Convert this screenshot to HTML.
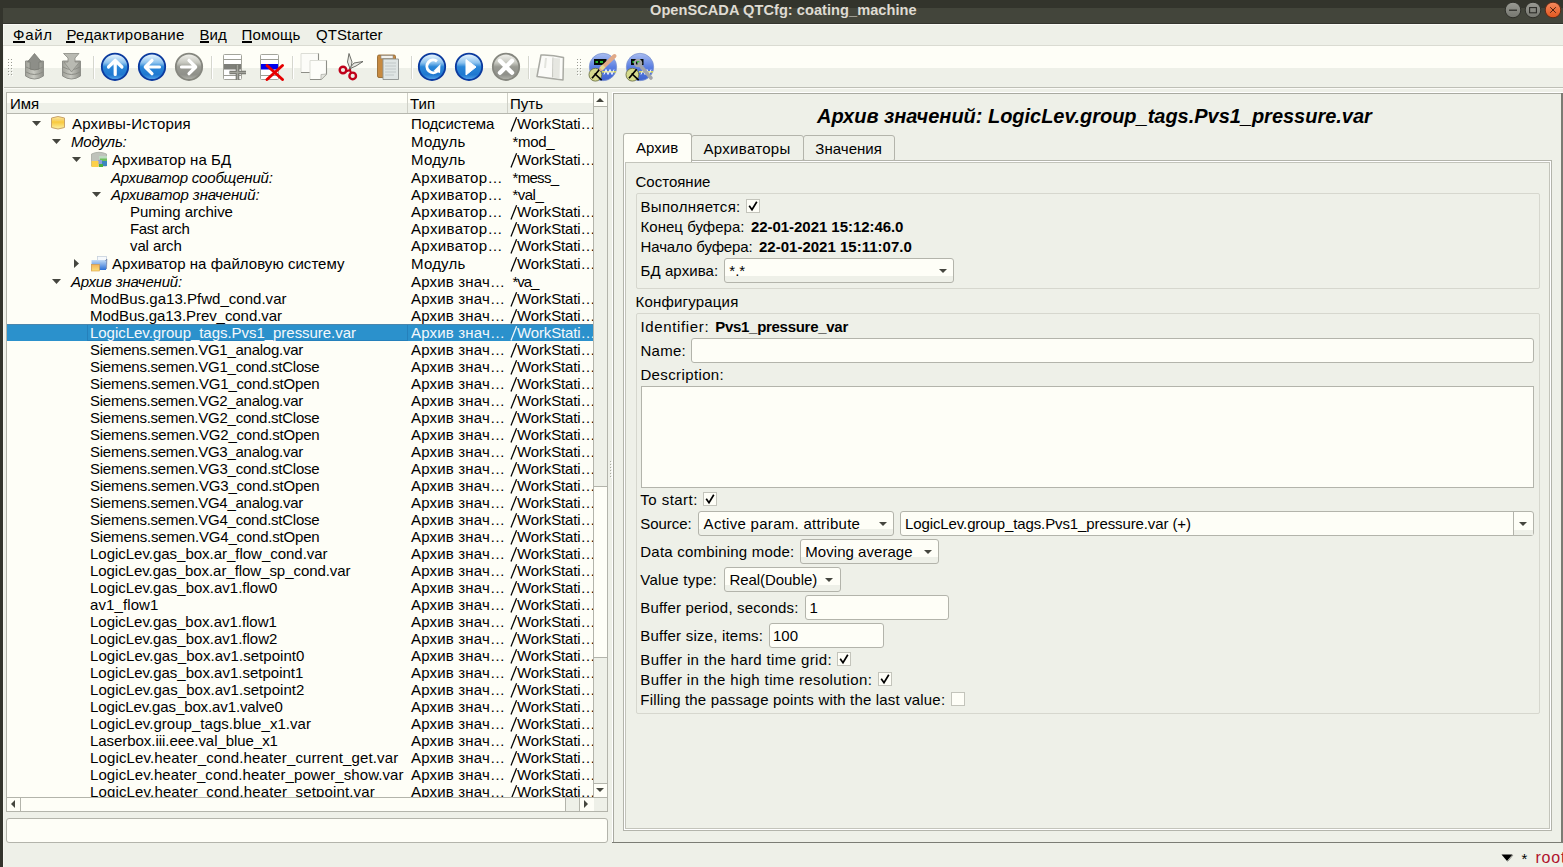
<!DOCTYPE html><html><head><meta charset="utf-8"><style>
html,body{margin:0;padding:0;}
body{width:1563px;height:867px;overflow:hidden;position:relative;background:#33342c;font-family:"Liberation Sans", sans-serif;}
div{position:absolute;box-sizing:border-box;}
.t{white-space:nowrap;}
svg{position:absolute;overflow:visible;}
</style></head><body>
<div style="left:3px;top:8px;width:1560px;height:15px;background:#43453b;"></div>
<div style="left:3px;top:23px;width:1560px;height:1px;background:#34352e;"></div>
<div class="t" style="left:650px;top:1.14px;font-size:14.6px;line-height:18px;font-weight:bold;font-style:normal;color:#dfdbd2;letter-spacing:0.038px;">OpenSCADA QTCfg: coating_machine</div>
<svg style="left:0;top:0" width="1563" height="24"><defs><linearGradient id="wb" x1="0" y1="0" x2="0" y2="1"><stop offset="0" stop-color="#9a9b94"/><stop offset="1" stop-color="#75766f"/></linearGradient><linearGradient id="wc" x1="0" y1="0" x2="0" y2="1"><stop offset="0" stop-color="#f58a5e"/><stop offset="1" stop-color="#e2561e"/></linearGradient></defs><circle cx="1513" cy="10" r="7.8" fill="url(#wb)" stroke="#2e2f29" stroke-width="1"/><rect x="1509" y="9.6" width="8" height="1.2" fill="#2b2b27"/><circle cx="1533" cy="10" r="7.8" fill="url(#wb)" stroke="#2e2f29" stroke-width="1"/><rect x="1529.6" y="7.6" width="6.8" height="5.2" fill="none" stroke="#2b2b27" stroke-width="1.1"/><circle cx="1553" cy="10" r="7.8" fill="url(#wc)" stroke="#5a2a18" stroke-width="1"/><path d="M1550.2 7.2 L1555.8 12.8 M1555.8 7.2 L1550.2 12.8" stroke="#3a1a0c" stroke-width="0.9"/></svg>
<div style="left:3px;top:24px;width:1560px;height:843px;background:#eef0e8;"></div>
<div style="left:3px;top:24px;width:1px;height:843px;background:#f6f6f0;"></div>
<div style="left:3px;top:24px;width:1560px;height:1px;background:#fbfbf6;"></div>
<div style="left:3px;top:45px;width:1560px;height:1px;background:#dadbd2;"></div>
<div class="t" style="left:13px;top:26.30px;font-size:15px;line-height:18px;font-weight:normal;font-style:normal;color:#000;letter-spacing:0.725px;">Файл</div>
<div class="t" style="left:66.5px;top:26.30px;font-size:15px;line-height:18px;font-weight:normal;font-style:normal;color:#000;letter-spacing:0.275px;">Редактирование</div>
<div class="t" style="left:199.5px;top:26.30px;font-size:15px;line-height:18px;font-weight:normal;font-style:normal;color:#000;letter-spacing:0.058px;">Вид</div>
<div class="t" style="left:241.5px;top:26.30px;font-size:15px;line-height:18px;font-weight:normal;font-style:normal;color:#000;letter-spacing:0.176px;">Помощь</div>
<div class="t" style="left:316px;top:26.30px;font-size:15px;line-height:18px;font-weight:normal;font-style:normal;color:#000;letter-spacing:0.094px;">QTStarter</div>
<div style="left:13px;top:41px;width:12px;height:2px;background:#000;"></div>
<div style="left:66px;top:41px;width:9px;height:2px;background:#000;"></div>
<div style="left:200px;top:41px;width:9px;height:2px;background:#000;"></div>
<div style="left:242px;top:41px;width:10px;height:2px;background:#000;"></div>
<div style="left:4px;top:46px;width:1559px;height:22px;background:#fefef7;"></div>
<div style="left:4px;top:87px;width:1559px;height:1px;background:#bebfb6;"></div>
<div style="left:4px;top:88px;width:1559px;height:1px;background:#fbfbf6;"></div>
<div style="left:9px;top:60px;width:1px;height:1px;background:#ffffff;"></div>
<div style="left:8px;top:59px;width:1px;height:1px;background:#9a9b94;"></div>
<div style="left:12px;top:60px;width:1px;height:1px;background:#ffffff;"></div>
<div style="left:11px;top:59px;width:1px;height:1px;background:#9a9b94;"></div>
<div style="left:9px;top:63px;width:1px;height:1px;background:#ffffff;"></div>
<div style="left:8px;top:62px;width:1px;height:1px;background:#9a9b94;"></div>
<div style="left:12px;top:63px;width:1px;height:1px;background:#ffffff;"></div>
<div style="left:11px;top:62px;width:1px;height:1px;background:#9a9b94;"></div>
<div style="left:9px;top:66px;width:1px;height:1px;background:#ffffff;"></div>
<div style="left:8px;top:65px;width:1px;height:1px;background:#9a9b94;"></div>
<div style="left:12px;top:66px;width:1px;height:1px;background:#ffffff;"></div>
<div style="left:11px;top:65px;width:1px;height:1px;background:#9a9b94;"></div>
<div style="left:9px;top:69px;width:1px;height:1px;background:#ffffff;"></div>
<div style="left:8px;top:68px;width:1px;height:1px;background:#9a9b94;"></div>
<div style="left:12px;top:69px;width:1px;height:1px;background:#ffffff;"></div>
<div style="left:11px;top:68px;width:1px;height:1px;background:#9a9b94;"></div>
<div style="left:9px;top:72px;width:1px;height:1px;background:#ffffff;"></div>
<div style="left:8px;top:71px;width:1px;height:1px;background:#9a9b94;"></div>
<div style="left:12px;top:72px;width:1px;height:1px;background:#ffffff;"></div>
<div style="left:11px;top:71px;width:1px;height:1px;background:#9a9b94;"></div>
<div style="left:9px;top:75px;width:1px;height:1px;background:#ffffff;"></div>
<div style="left:8px;top:74px;width:1px;height:1px;background:#9a9b94;"></div>
<div style="left:12px;top:75px;width:1px;height:1px;background:#ffffff;"></div>
<div style="left:11px;top:74px;width:1px;height:1px;background:#9a9b94;"></div>
<div style="left:578px;top:60px;width:1px;height:1px;background:#ffffff;"></div>
<div style="left:577px;top:59px;width:1px;height:1px;background:#9a9b94;"></div>
<div style="left:581px;top:60px;width:1px;height:1px;background:#ffffff;"></div>
<div style="left:580px;top:59px;width:1px;height:1px;background:#9a9b94;"></div>
<div style="left:578px;top:63px;width:1px;height:1px;background:#ffffff;"></div>
<div style="left:577px;top:62px;width:1px;height:1px;background:#9a9b94;"></div>
<div style="left:581px;top:63px;width:1px;height:1px;background:#ffffff;"></div>
<div style="left:580px;top:62px;width:1px;height:1px;background:#9a9b94;"></div>
<div style="left:578px;top:66px;width:1px;height:1px;background:#ffffff;"></div>
<div style="left:577px;top:65px;width:1px;height:1px;background:#9a9b94;"></div>
<div style="left:581px;top:66px;width:1px;height:1px;background:#ffffff;"></div>
<div style="left:580px;top:65px;width:1px;height:1px;background:#9a9b94;"></div>
<div style="left:578px;top:69px;width:1px;height:1px;background:#ffffff;"></div>
<div style="left:577px;top:68px;width:1px;height:1px;background:#9a9b94;"></div>
<div style="left:581px;top:69px;width:1px;height:1px;background:#ffffff;"></div>
<div style="left:580px;top:68px;width:1px;height:1px;background:#9a9b94;"></div>
<div style="left:578px;top:72px;width:1px;height:1px;background:#ffffff;"></div>
<div style="left:577px;top:71px;width:1px;height:1px;background:#9a9b94;"></div>
<div style="left:581px;top:72px;width:1px;height:1px;background:#ffffff;"></div>
<div style="left:580px;top:71px;width:1px;height:1px;background:#9a9b94;"></div>
<div style="left:578px;top:75px;width:1px;height:1px;background:#ffffff;"></div>
<div style="left:577px;top:74px;width:1px;height:1px;background:#9a9b94;"></div>
<div style="left:581px;top:75px;width:1px;height:1px;background:#ffffff;"></div>
<div style="left:580px;top:74px;width:1px;height:1px;background:#9a9b94;"></div>
<div style="left:93px;top:56px;width:1px;height:23px;background:#d6d7ce;"></div>
<div style="left:94px;top:56px;width:1px;height:23px;background:#ffffff;"></div>
<div style="left:211px;top:56px;width:1px;height:23px;background:#d6d7ce;"></div>
<div style="left:212px;top:56px;width:1px;height:23px;background:#ffffff;"></div>
<div style="left:292px;top:56px;width:1px;height:23px;background:#d6d7ce;"></div>
<div style="left:293px;top:56px;width:1px;height:23px;background:#ffffff;"></div>
<div style="left:411px;top:56px;width:1px;height:23px;background:#d6d7ce;"></div>
<div style="left:412px;top:56px;width:1px;height:23px;background:#ffffff;"></div>
<div style="left:528px;top:56px;width:1px;height:23px;background:#d6d7ce;"></div>
<div style="left:529px;top:56px;width:1px;height:23px;background:#ffffff;"></div>
<svg style="left:0;top:0" width="700" height="90" viewBox="0 0 700 90"><defs>
<linearGradient id="bl" x1="0" y1="0" x2="0" y2="1">
 <stop offset="0" stop-color="#f2fbff"/><stop offset="0.35" stop-color="#8cc2ee"/><stop offset="0.5" stop-color="#2a86d8"/><stop offset="0.8" stop-color="#1f78d0"/><stop offset="1" stop-color="#5aa8ec"/></linearGradient>
<linearGradient id="gr" x1="0" y1="0" x2="0" y2="1">
 <stop offset="0" stop-color="#f4f4ef"/><stop offset="0.35" stop-color="#c6c7bf"/><stop offset="0.5" stop-color="#9a9b93"/><stop offset="0.8" stop-color="#8f908a"/><stop offset="1" stop-color="#b5b6ae"/></linearGradient>
<linearGradient id="vca" x1="0" y1="0" x2="0" y2="1">
 <stop offset="0" stop-color="#a9bdf0"/><stop offset="0.5" stop-color="#5b7fe2"/><stop offset="1" stop-color="#3f63d0"/></linearGradient>
<linearGradient id="cyl" x1="0" y1="0" x2="1" y2="0">
 <stop offset="0" stop-color="#9fa098"/><stop offset="0.45" stop-color="#c9cac2"/><stop offset="1" stop-color="#8d8e87"/></linearGradient>
</defs><path d="M25.5 61 L25.5 76 Q34.5 82 43.5 76 L43.5 61 Z" fill="url(#cyl)" stroke="#8f908a" stroke-width="1"/><path d="M26 67 Q34.5 72 43 67 M26 72 Q34.5 77 43 72" fill="none" stroke="#8a8b84" stroke-width="1"/><path d="M27.5 62 L34.5 53.5 L41.5 62 L39 62 L39 69 Q34.5 71 30 69 L30 62 Z" fill="#8d8e88" stroke="#7a7b74" stroke-width="0.8"/><path d="M62.5 61 L62.5 76 Q71.5 82 80.5 76 L80.5 61 Z" fill="url(#cyl)" stroke="#8f908a" stroke-width="1"/><path d="M63 67 Q71.5 72 80 67 M63 72 Q71.5 77 80 72" fill="none" stroke="#8a8b84" stroke-width="1"/><path d="M63.5 53.5 L79 53.5 L75 58 L75 62 L79.5 62 L71.5 72 L64 62 L68 62 L68 58 Z" fill="#b9bab2" stroke="#8a8b84" stroke-width="0.8"/><circle cx="115" cy="66.8" r="13.2" fill="url(#bl)" stroke="#0b3a9e" stroke-width="1.8"/><path d="M115.2 74.5 L115.2 60.5 M108.5 67 L115.2 60.3 L121.9 67" fill="none" stroke="#fff" stroke-width="3.2" stroke-linecap="round" stroke-linejoin="round"/><circle cx="152" cy="66.8" r="13.2" fill="url(#bl)" stroke="#0b3a9e" stroke-width="1.8"/><path d="M159.5 67 L145.5 67 M152 60.3 L145.3 67 L152 73.7" fill="none" stroke="#fff" stroke-width="3.2" stroke-linecap="round" stroke-linejoin="round"/><circle cx="189" cy="66.8" r="13.2" fill="url(#gr)" stroke="#86877f" stroke-width="1.8"/><path d="M181.5 67 L195.5 67 M189 60.3 L195.7 67 L189 73.7" fill="none" stroke="#fff" stroke-width="3.2" stroke-linecap="round" stroke-linejoin="round"/><rect x="223.5" y="54.5" width="18" height="25" rx="1" fill="#fff" stroke="#a3a49b" stroke-width="1"/><path d="M224 59.5 H241 M224 75.5 H241" stroke="#9c9d95" stroke-width="1"/><rect x="224" y="64" width="17" height="5.5" fill="#7e7f79"/><path d="M229.5 72.5 H246 M237.5 65 V80" stroke="#6f706a" stroke-width="3.6"/><path d="M229.5 72.5 H246 M237.5 65 V80" stroke="#a2a39b" stroke-width="1.6"/><rect x="260.5" y="54.5" width="18" height="25" rx="1" fill="#fff" stroke="#a3a49b" stroke-width="1"/><path d="M261 59.5 H278 M261 75.5 H278" stroke="#9c9d95" stroke-width="1"/><rect x="261" y="64" width="17" height="5.5" fill="#0000ee"/><path d="M267 65.5 L282.5 79.5 M282.5 65.5 L267 79.5" stroke="#e60000" stroke-width="3" stroke-linecap="round"/><path d="M301 53.5 H318.5 V67 L313 72.5 H301 Z" fill="#fcfcf8" stroke="#dcddd6" stroke-width="1"/><path d="M318.5 53.5 V67 L313 72.5 H301" fill="none" stroke="#8d8e87" stroke-width="1.1"/><path d="M313 72.5 L313 67.5 L318.5 67" fill="#e4e5df" stroke="#b0b1aa" stroke-width="0.8"/><path d="M310 60.5 H326.5 V74 L321 79.5 H310 Z" fill="#fdfdf9" stroke="#dcddd6" stroke-width="1"/><path d="M326.5 60.5 V74 L321 79.5 H310" fill="none" stroke="#8d8e87" stroke-width="1.1"/><path d="M321 79.5 L321 74.5 L326.5 74" fill="#e4e5df" stroke="#b0b1aa" stroke-width="0.8"/><path d="M349 53.5 L347.5 62 L350.5 70 L352 62 Z" fill="#e9eae4" stroke="#5f605a" stroke-width="0.9"/><path d="M363 61.5 L354 63 L349 69 L356 66 Z" fill="#e9eae4" stroke="#5f605a" stroke-width="0.9"/><circle cx="343" cy="70" r="3.3" fill="none" stroke="#c0001a" stroke-width="2.4"/><circle cx="352.7" cy="75.9" r="3.3" fill="none" stroke="#c0001a" stroke-width="2.4"/><path d="M345.5 71.5 L350 70 L351 73" fill="none" stroke="#c0001a" stroke-width="2"/><rect x="377.5" y="55" width="18" height="22.5" rx="1.5" fill="#c78a40" stroke="#8c5e25" stroke-width="0.8"/><rect x="381" y="55.5" width="12" height="3" fill="#f3f3ef" stroke="#888" stroke-width="0.6"/><path d="M383 59 H398.5 V79.5 H383 Z" fill="#dfe5e4" stroke="#8d9290" stroke-width="0.9"/><path d="M385 63 H396 M385 66 H396 M385 69 H396 M385 72 H396 M385 75 H394" stroke="#b9c1c0" stroke-width="0.8"/><circle cx="432" cy="66.8" r="13.2" fill="url(#bl)" stroke="#0b3a9e" stroke-width="1.8"/><path d="M437 61.3 A6.3 6.3 0 1 0 437.5 71" fill="none" stroke="#fff" stroke-width="3"/><path d="M440.5 64 L440 73 L433.5 71 Z" fill="#fff"/><circle cx="469" cy="66.8" r="13.2" fill="url(#bl)" stroke="#0b3a9e" stroke-width="1.8"/><path d="M466 59.5 L476 67 L466 75 Z" fill="#fff" stroke="#fff" stroke-width="1" stroke-linejoin="round"/><circle cx="506" cy="66.8" r="13.2" fill="url(#gr)" stroke="#86877f" stroke-width="1.8"/><path d="M500 60.8 L512 72.8 M512 60.8 L500 72.8" stroke="#fff" stroke-width="4.4" stroke-linecap="round"/><path d="M541 55 Q552 54.5 563.5 57.5 L563 80 Q549 78 537 76.5 Z" fill="#fbfbf8" stroke="#a9aaa3" stroke-width="1.5" stroke-linejoin="round"/><path d="M554 58 L560 58.5 L559.5 78.5 L553 77.5 Z" fill="#e6e7e1"/><path d="M553 57.5 L552.5 77.5" stroke="#c9cac3" stroke-width="1.2"/><path d="M546 58 L545 68" stroke="#e3e4de" stroke-width="2"/><circle cx="603" cy="67" r="13.7" fill="url(#vca)" stroke="#7f95cf" stroke-width="0.8"/><rect x="594" y="59" width="12.5" height="6" fill="#050a05"/><path d="M595.5 62 h2.5 M600 62 h3" stroke="#29b531" stroke-width="2"/><path d="M602 71.8 H616" stroke="#d4d65a" stroke-width="1.6"/><path d="M604 74.5 l2 -5 l2 5 l2 -5 l2 5 l2 -5" fill="none" stroke="#f4f6ff" stroke-width="1"/><circle cx="595.4" cy="74.7" r="6.4" fill="#d5da8c" stroke="#6f7446" stroke-width="0.9"/><path d="M592 78.2 L599.7 69.2 M594.6 73.5 L601.7 80.2" stroke="#000" stroke-width="1.7"/><path d="M601 69 L614.5 56" stroke="#e0a988" stroke-width="4" stroke-linecap="round"/><path d="M601 69 L604 66" stroke="#e8d890" stroke-width="4"/><circle cx="640" cy="67" r="13.7" fill="url(#vca)" stroke="#7f95cf" stroke-width="0.8"/><rect x="631" y="59" width="12.5" height="6" fill="#050a05"/><path d="M632.5 62 h2.5 M637 62 h3" stroke="#29b531" stroke-width="2"/><path d="M639 71.8 H653" stroke="#d4d65a" stroke-width="1.6"/><path d="M641 74.5 l2 -5 l2 5 l2 -5 l2 5 l2 -5" fill="none" stroke="#f4f6ff" stroke-width="1"/><circle cx="632.4" cy="74.7" r="6.4" fill="#d5da8c" stroke="#6f7446" stroke-width="0.9"/><path d="M629 78.2 L636.7 69.2 M631.6 73.5 L638.7 80.2" stroke="#000" stroke-width="1.7"/><path d="M639 64 L651 78" stroke="#a3a5aa" stroke-width="3.6" stroke-linecap="round"/><circle cx="638" cy="63" r="3.2" fill="none" stroke="#a3a5aa" stroke-width="2.2"/></svg>
<div style="left:6px;top:92px;width:602px;height:720px;background:#fefef7;border:1px solid #b3b4ab;"></div>
<div style="left:7px;top:93px;width:586px;height:10px;background:#fefef7;"></div>
<div style="left:7px;top:103px;width:586px;height:10px;background:#eef0e8;"></div>
<div style="left:7px;top:113px;width:586px;height:1px;background:#b6b7ae;"></div>
<div style="left:407px;top:93px;width:1px;height:20px;background:#cfd0c7;"></div>
<div style="left:507px;top:93px;width:1px;height:20px;background:#cfd0c7;"></div>
<div class="t" style="left:10px;top:94.80px;font-size:15px;line-height:18px;font-weight:normal;font-style:normal;color:#000;">Имя</div>
<div class="t" style="left:410px;top:94.80px;font-size:15px;line-height:18px;font-weight:normal;font-style:normal;color:#000;">Тип</div>
<div class="t" style="left:510px;top:94.80px;font-size:15px;line-height:18px;font-weight:normal;font-style:normal;color:#000;">Путь</div>
<div style="left:7px;top:114px;width:586px;height:683px;overflow:hidden;">
<svg style="left:25px;top:6.5px" width="10" height="6"><path d="M0 0 L9 0 L4.5 5 Z" fill="#45463f"/></svg>
<svg style="left:44px;top:1px" width="17" height="17"><defs><linearGradient id="ty" x1="0" y1="0" x2="0" y2="1"><stop offset="0" stop-color="#fde9a0"/><stop offset="0.45" stop-color="#f8c93e"/><stop offset="1" stop-color="#fcf2a6"/></linearGradient></defs><path d="M0.5 3 Q7 0 13.5 3 L13.5 12.5 Q7 15.5 0.5 12.5 Z" fill="url(#ty)" stroke="#c8a36c" stroke-width="1"/><path d="M1 4 Q7 6.5 13 4" fill="none" stroke="#f0d080" stroke-width="0.8"/></svg>
<div class="t" style="left:65px;top:1.30px;font-size:15px;line-height:18px;font-weight:normal;font-style:normal;color:#000;letter-spacing:0.212px;">Архивы-История</div>
<div class="t" style="left:404px;top:1.30px;font-size:15px;line-height:18px;font-weight:normal;font-style:normal;color:#000;letter-spacing:-0.142px;">Подсистема</div>
<svg style="left:503px;top:1.50px" width="8" height="17"><path d="M1 15.5 L6.6 1.2" stroke="#000" stroke-width="1.25" fill="none"/></svg>
<div class="t" style="left:510.0px;top:1.30px;font-size:15px;line-height:18px;font-weight:normal;font-style:normal;color:#000;letter-spacing:-0.138px;">WorkStati…</div>
<svg style="left:45px;top:24.5px" width="10" height="6"><path d="M0 0 L9 0 L4.5 5 Z" fill="#45463f"/></svg>
<div class="t" style="left:64px;top:19.30px;font-size:15px;line-height:18px;font-weight:normal;font-style:italic;color:#000;letter-spacing:-0.173px;">Модуль:</div>
<div class="t" style="left:404px;top:19.30px;font-size:15px;line-height:18px;font-weight:normal;font-style:normal;color:#000;letter-spacing:0.230px;">Модуль</div>
<div class="t" style="left:505.5px;top:19.30px;font-size:15px;line-height:18px;font-weight:normal;font-style:normal;color:#000;letter-spacing:-0.304px;">*mod_</div>
<svg style="left:65px;top:42.5px" width="10" height="6"><path d="M0 0 L9 0 L4.5 5 Z" fill="#45463f"/></svg>
<svg style="left:84px;top:37px" width="17" height="17"><path d="M0.5 3 Q8 -0.5 15.5 3 L15.5 15 L0.5 15 Z" fill="#bfc3bb" stroke="#a4a8a0" stroke-width="0.8"/><rect x="8" y="5" width="8" height="3" fill="#bcd9c0"/><rect x="9" y="7.5" width="7" height="3" fill="#6fbf5a"/><rect x="7" y="9" width="4" height="4" fill="#8ca0d8"/><rect x="11" y="10" width="5" height="5" fill="#3c86c0"/><rect x="8" y="13" width="4" height="3" fill="#4cb03c"/><rect x="0.5" y="10" width="7" height="6" fill="#fcd04a"/></svg>
<div class="t" style="left:105px;top:37.30px;font-size:15px;line-height:18px;font-weight:normal;font-style:normal;color:#000;letter-spacing:0.067px;">Архиватор на БД</div>
<div class="t" style="left:404px;top:37.30px;font-size:15px;line-height:18px;font-weight:normal;font-style:normal;color:#000;letter-spacing:0.230px;">Модуль</div>
<svg style="left:503px;top:37.50px" width="8" height="17"><path d="M1 15.5 L6.6 1.2" stroke="#000" stroke-width="1.25" fill="none"/></svg>
<div class="t" style="left:510.0px;top:37.30px;font-size:15px;line-height:18px;font-weight:normal;font-style:normal;color:#000;letter-spacing:-0.138px;">WorkStati…</div>
<div class="t" style="left:104px;top:55.30px;font-size:15px;line-height:18px;font-weight:normal;font-style:italic;color:#000;letter-spacing:-0.194px;">Архиватор сообщений:</div>
<div class="t" style="left:404px;top:55.30px;font-size:15px;line-height:18px;font-weight:normal;font-style:normal;color:#000;letter-spacing:0.360px;">Архиватор…</div>
<div class="t" style="left:505.5px;top:55.30px;font-size:15px;line-height:18px;font-weight:normal;font-style:normal;color:#000;letter-spacing:-0.695px;">*mess_</div>
<svg style="left:85px;top:77.5px" width="10" height="6"><path d="M0 0 L9 0 L4.5 5 Z" fill="#45463f"/></svg>
<div class="t" style="left:104px;top:72.30px;font-size:15px;line-height:18px;font-weight:normal;font-style:italic;color:#000;letter-spacing:-0.096px;">Архиватор значений:</div>
<div class="t" style="left:404px;top:72.30px;font-size:15px;line-height:18px;font-weight:normal;font-style:normal;color:#000;letter-spacing:0.360px;">Архиватор…</div>
<div class="t" style="left:505.5px;top:72.30px;font-size:15px;line-height:18px;font-weight:normal;font-style:normal;color:#000;letter-spacing:-0.528px;">*val_</div>
<div class="t" style="left:123px;top:89.30px;font-size:15px;line-height:18px;font-weight:normal;font-style:normal;color:#000;letter-spacing:-0.034px;">Puming archive</div>
<div class="t" style="left:404px;top:89.30px;font-size:15px;line-height:18px;font-weight:normal;font-style:normal;color:#000;letter-spacing:0.360px;">Архиватор…</div>
<svg style="left:503px;top:89.50px" width="8" height="17"><path d="M1 15.5 L6.6 1.2" stroke="#000" stroke-width="1.25" fill="none"/></svg>
<div class="t" style="left:510.0px;top:89.30px;font-size:15px;line-height:18px;font-weight:normal;font-style:normal;color:#000;letter-spacing:-0.138px;">WorkStati…</div>
<div class="t" style="left:123px;top:106.30px;font-size:15px;line-height:18px;font-weight:normal;font-style:normal;color:#000;letter-spacing:-0.335px;">Fast arch</div>
<div class="t" style="left:404px;top:106.30px;font-size:15px;line-height:18px;font-weight:normal;font-style:normal;color:#000;letter-spacing:0.360px;">Архиватор…</div>
<svg style="left:503px;top:106.50px" width="8" height="17"><path d="M1 15.5 L6.6 1.2" stroke="#000" stroke-width="1.25" fill="none"/></svg>
<div class="t" style="left:510.0px;top:106.30px;font-size:15px;line-height:18px;font-weight:normal;font-style:normal;color:#000;letter-spacing:-0.138px;">WorkStati…</div>
<div class="t" style="left:123px;top:123.30px;font-size:15px;line-height:18px;font-weight:normal;font-style:normal;color:#000;letter-spacing:-0.111px;">val arch</div>
<div class="t" style="left:404px;top:123.30px;font-size:15px;line-height:18px;font-weight:normal;font-style:normal;color:#000;letter-spacing:0.360px;">Архиватор…</div>
<svg style="left:503px;top:123.50px" width="8" height="17"><path d="M1 15.5 L6.6 1.2" stroke="#000" stroke-width="1.25" fill="none"/></svg>
<div class="t" style="left:510.0px;top:123.30px;font-size:15px;line-height:18px;font-weight:normal;font-style:normal;color:#000;letter-spacing:-0.138px;">WorkStati…</div>
<svg style="left:67px;top:145.0px" width="6" height="10"><path d="M0 0 L5 4.5 L0 9 Z" fill="#45463f"/></svg>
<svg style="left:84px;top:141px" width="17" height="17"><defs><linearGradient id="tb" x1="0" y1="0" x2="0" y2="1"><stop offset="0" stop-color="#c3dcf6"/><stop offset="1" stop-color="#2a6fd6"/></linearGradient><linearGradient id="to" x1="0" y1="0" x2="0" y2="1"><stop offset="0" stop-color="#f3b25a"/><stop offset="1" stop-color="#fbe07a"/></linearGradient></defs><rect x="6.5" y="1.5" width="9" height="7" fill="#f6f9fc" stroke="#c6d0dc" stroke-width="0.8"/><path d="M0.5 5 L15.8 5 L15 15 L0.5 15 Z" fill="url(#tb)"/><path d="M14.5 6 L15.8 4 L15.5 14" stroke="#6c7fa8" stroke-width="0.8" fill="none"/><rect x="0.5" y="9.5" width="8" height="6.5" fill="url(#to)" stroke="#d99a40" stroke-width="0.6"/></svg>
<div class="t" style="left:105px;top:141.30px;font-size:15px;line-height:18px;font-weight:normal;font-style:normal;color:#000;letter-spacing:0.036px;">Архиватор на файловую систему</div>
<div class="t" style="left:404px;top:141.30px;font-size:15px;line-height:18px;font-weight:normal;font-style:normal;color:#000;letter-spacing:0.230px;">Модуль</div>
<svg style="left:503px;top:141.50px" width="8" height="17"><path d="M1 15.5 L6.6 1.2" stroke="#000" stroke-width="1.25" fill="none"/></svg>
<div class="t" style="left:510.0px;top:141.30px;font-size:15px;line-height:18px;font-weight:normal;font-style:normal;color:#000;letter-spacing:-0.138px;">WorkStati…</div>
<svg style="left:45px;top:164.5px" width="10" height="6"><path d="M0 0 L9 0 L4.5 5 Z" fill="#45463f"/></svg>
<div class="t" style="left:64px;top:159.30px;font-size:15px;line-height:18px;font-weight:normal;font-style:italic;color:#000;letter-spacing:-0.164px;">Архив значений:</div>
<div class="t" style="left:404px;top:159.30px;font-size:15px;line-height:18px;font-weight:normal;font-style:normal;color:#000;letter-spacing:0.182px;">Архив знач…</div>
<div class="t" style="left:505.5px;top:159.30px;font-size:15px;line-height:18px;font-weight:normal;font-style:normal;color:#000;letter-spacing:-1.060px;">*va_</div>
<div class="t" style="left:83px;top:176.30px;font-size:15px;line-height:18px;font-weight:normal;font-style:normal;color:#000;letter-spacing:0.023px;">ModBus.ga13.Pfwd_cond.var</div>
<div class="t" style="left:404px;top:176.30px;font-size:15px;line-height:18px;font-weight:normal;font-style:normal;color:#000;letter-spacing:0.182px;">Архив знач…</div>
<svg style="left:503px;top:176.50px" width="8" height="17"><path d="M1 15.5 L6.6 1.2" stroke="#000" stroke-width="1.25" fill="none"/></svg>
<div class="t" style="left:510.0px;top:176.30px;font-size:15px;line-height:18px;font-weight:normal;font-style:normal;color:#000;letter-spacing:-0.138px;">WorkStati…</div>
<div class="t" style="left:83px;top:193.30px;font-size:15px;line-height:18px;font-weight:normal;font-style:normal;color:#000;letter-spacing:-0.061px;">ModBus.ga13.Prev_cond.var</div>
<div class="t" style="left:404px;top:193.30px;font-size:15px;line-height:18px;font-weight:normal;font-style:normal;color:#000;letter-spacing:0.182px;">Архив знач…</div>
<svg style="left:503px;top:193.50px" width="8" height="17"><path d="M1 15.5 L6.6 1.2" stroke="#000" stroke-width="1.25" fill="none"/></svg>
<div class="t" style="left:510.0px;top:193.30px;font-size:15px;line-height:18px;font-weight:normal;font-style:normal;color:#000;letter-spacing:-0.138px;">WorkStati…</div>
<div style="left:0;top:210px;width:586px;height:17px;background:#2b91cc;border-top:1px solid #4a86ad;"></div>
<div style="left:80px;top:211px;width:321px;height:16px;border-left:1px solid #2580bb;border-right:1px solid #2580bb;border-bottom:1px solid #2580bb;"></div>
<div class="t" style="left:83px;top:210.30px;font-size:15px;line-height:18px;font-weight:normal;font-style:normal;color:#f4f8fb;letter-spacing:-0.038px;">LogicLev.group_tags.Pvs1_pressure.var</div>
<div class="t" style="left:404px;top:210.30px;font-size:15px;line-height:18px;font-weight:normal;font-style:normal;color:#f4f8fb;letter-spacing:0.182px;">Архив знач…</div>
<svg style="left:503px;top:210.50px" width="8" height="17"><path d="M1 15.5 L6.6 1.2" stroke="#f4f8fb" stroke-width="1.25" fill="none"/></svg>
<div class="t" style="left:510.0px;top:210.30px;font-size:15px;line-height:18px;font-weight:normal;font-style:normal;color:#f4f8fb;letter-spacing:-0.138px;">WorkStati…</div>
<div class="t" style="left:83px;top:227.30px;font-size:15px;line-height:18px;font-weight:normal;font-style:normal;color:#000;letter-spacing:-0.253px;">Siemens.semen.VG1_analog.var</div>
<div class="t" style="left:404px;top:227.30px;font-size:15px;line-height:18px;font-weight:normal;font-style:normal;color:#000;letter-spacing:0.182px;">Архив знач…</div>
<svg style="left:503px;top:227.50px" width="8" height="17"><path d="M1 15.5 L6.6 1.2" stroke="#000" stroke-width="1.25" fill="none"/></svg>
<div class="t" style="left:510.0px;top:227.30px;font-size:15px;line-height:18px;font-weight:normal;font-style:normal;color:#000;letter-spacing:-0.138px;">WorkStati…</div>
<div class="t" style="left:83px;top:244.30px;font-size:15px;line-height:18px;font-weight:normal;font-style:normal;color:#000;letter-spacing:-0.246px;">Siemens.semen.VG1_cond.stClose</div>
<div class="t" style="left:404px;top:244.30px;font-size:15px;line-height:18px;font-weight:normal;font-style:normal;color:#000;letter-spacing:0.182px;">Архив знач…</div>
<svg style="left:503px;top:244.50px" width="8" height="17"><path d="M1 15.5 L6.6 1.2" stroke="#000" stroke-width="1.25" fill="none"/></svg>
<div class="t" style="left:510.0px;top:244.30px;font-size:15px;line-height:18px;font-weight:normal;font-style:normal;color:#000;letter-spacing:-0.138px;">WorkStati…</div>
<div class="t" style="left:83px;top:261.30px;font-size:15px;line-height:18px;font-weight:normal;font-style:normal;color:#000;letter-spacing:-0.196px;">Siemens.semen.VG1_cond.stOpen</div>
<div class="t" style="left:404px;top:261.30px;font-size:15px;line-height:18px;font-weight:normal;font-style:normal;color:#000;letter-spacing:0.182px;">Архив знач…</div>
<svg style="left:503px;top:261.50px" width="8" height="17"><path d="M1 15.5 L6.6 1.2" stroke="#000" stroke-width="1.25" fill="none"/></svg>
<div class="t" style="left:510.0px;top:261.30px;font-size:15px;line-height:18px;font-weight:normal;font-style:normal;color:#000;letter-spacing:-0.138px;">WorkStati…</div>
<div class="t" style="left:83px;top:278.30px;font-size:15px;line-height:18px;font-weight:normal;font-style:normal;color:#000;letter-spacing:-0.253px;">Siemens.semen.VG2_analog.var</div>
<div class="t" style="left:404px;top:278.30px;font-size:15px;line-height:18px;font-weight:normal;font-style:normal;color:#000;letter-spacing:0.182px;">Архив знач…</div>
<svg style="left:503px;top:278.50px" width="8" height="17"><path d="M1 15.5 L6.6 1.2" stroke="#000" stroke-width="1.25" fill="none"/></svg>
<div class="t" style="left:510.0px;top:278.30px;font-size:15px;line-height:18px;font-weight:normal;font-style:normal;color:#000;letter-spacing:-0.138px;">WorkStati…</div>
<div class="t" style="left:83px;top:295.30px;font-size:15px;line-height:18px;font-weight:normal;font-style:normal;color:#000;letter-spacing:-0.246px;">Siemens.semen.VG2_cond.stClose</div>
<div class="t" style="left:404px;top:295.30px;font-size:15px;line-height:18px;font-weight:normal;font-style:normal;color:#000;letter-spacing:0.182px;">Архив знач…</div>
<svg style="left:503px;top:295.50px" width="8" height="17"><path d="M1 15.5 L6.6 1.2" stroke="#000" stroke-width="1.25" fill="none"/></svg>
<div class="t" style="left:510.0px;top:295.30px;font-size:15px;line-height:18px;font-weight:normal;font-style:normal;color:#000;letter-spacing:-0.138px;">WorkStati…</div>
<div class="t" style="left:83px;top:312.30px;font-size:15px;line-height:18px;font-weight:normal;font-style:normal;color:#000;letter-spacing:-0.196px;">Siemens.semen.VG2_cond.stOpen</div>
<div class="t" style="left:404px;top:312.30px;font-size:15px;line-height:18px;font-weight:normal;font-style:normal;color:#000;letter-spacing:0.182px;">Архив знач…</div>
<svg style="left:503px;top:312.50px" width="8" height="17"><path d="M1 15.5 L6.6 1.2" stroke="#000" stroke-width="1.25" fill="none"/></svg>
<div class="t" style="left:510.0px;top:312.30px;font-size:15px;line-height:18px;font-weight:normal;font-style:normal;color:#000;letter-spacing:-0.138px;">WorkStati…</div>
<div class="t" style="left:83px;top:329.30px;font-size:15px;line-height:18px;font-weight:normal;font-style:normal;color:#000;letter-spacing:-0.253px;">Siemens.semen.VG3_analog.var</div>
<div class="t" style="left:404px;top:329.30px;font-size:15px;line-height:18px;font-weight:normal;font-style:normal;color:#000;letter-spacing:0.182px;">Архив знач…</div>
<svg style="left:503px;top:329.50px" width="8" height="17"><path d="M1 15.5 L6.6 1.2" stroke="#000" stroke-width="1.25" fill="none"/></svg>
<div class="t" style="left:510.0px;top:329.30px;font-size:15px;line-height:18px;font-weight:normal;font-style:normal;color:#000;letter-spacing:-0.138px;">WorkStati…</div>
<div class="t" style="left:83px;top:346.30px;font-size:15px;line-height:18px;font-weight:normal;font-style:normal;color:#000;letter-spacing:-0.246px;">Siemens.semen.VG3_cond.stClose</div>
<div class="t" style="left:404px;top:346.30px;font-size:15px;line-height:18px;font-weight:normal;font-style:normal;color:#000;letter-spacing:0.182px;">Архив знач…</div>
<svg style="left:503px;top:346.50px" width="8" height="17"><path d="M1 15.5 L6.6 1.2" stroke="#000" stroke-width="1.25" fill="none"/></svg>
<div class="t" style="left:510.0px;top:346.30px;font-size:15px;line-height:18px;font-weight:normal;font-style:normal;color:#000;letter-spacing:-0.138px;">WorkStati…</div>
<div class="t" style="left:83px;top:363.30px;font-size:15px;line-height:18px;font-weight:normal;font-style:normal;color:#000;letter-spacing:-0.196px;">Siemens.semen.VG3_cond.stOpen</div>
<div class="t" style="left:404px;top:363.30px;font-size:15px;line-height:18px;font-weight:normal;font-style:normal;color:#000;letter-spacing:0.182px;">Архив знач…</div>
<svg style="left:503px;top:363.50px" width="8" height="17"><path d="M1 15.5 L6.6 1.2" stroke="#000" stroke-width="1.25" fill="none"/></svg>
<div class="t" style="left:510.0px;top:363.30px;font-size:15px;line-height:18px;font-weight:normal;font-style:normal;color:#000;letter-spacing:-0.138px;">WorkStati…</div>
<div class="t" style="left:83px;top:380.30px;font-size:15px;line-height:18px;font-weight:normal;font-style:normal;color:#000;letter-spacing:-0.253px;">Siemens.semen.VG4_analog.var</div>
<div class="t" style="left:404px;top:380.30px;font-size:15px;line-height:18px;font-weight:normal;font-style:normal;color:#000;letter-spacing:0.182px;">Архив знач…</div>
<svg style="left:503px;top:380.50px" width="8" height="17"><path d="M1 15.5 L6.6 1.2" stroke="#000" stroke-width="1.25" fill="none"/></svg>
<div class="t" style="left:510.0px;top:380.30px;font-size:15px;line-height:18px;font-weight:normal;font-style:normal;color:#000;letter-spacing:-0.138px;">WorkStati…</div>
<div class="t" style="left:83px;top:397.30px;font-size:15px;line-height:18px;font-weight:normal;font-style:normal;color:#000;letter-spacing:-0.246px;">Siemens.semen.VG4_cond.stClose</div>
<div class="t" style="left:404px;top:397.30px;font-size:15px;line-height:18px;font-weight:normal;font-style:normal;color:#000;letter-spacing:0.182px;">Архив знач…</div>
<svg style="left:503px;top:397.50px" width="8" height="17"><path d="M1 15.5 L6.6 1.2" stroke="#000" stroke-width="1.25" fill="none"/></svg>
<div class="t" style="left:510.0px;top:397.30px;font-size:15px;line-height:18px;font-weight:normal;font-style:normal;color:#000;letter-spacing:-0.138px;">WorkStati…</div>
<div class="t" style="left:83px;top:414.30px;font-size:15px;line-height:18px;font-weight:normal;font-style:normal;color:#000;letter-spacing:-0.196px;">Siemens.semen.VG4_cond.stOpen</div>
<div class="t" style="left:404px;top:414.30px;font-size:15px;line-height:18px;font-weight:normal;font-style:normal;color:#000;letter-spacing:0.182px;">Архив знач…</div>
<svg style="left:503px;top:414.50px" width="8" height="17"><path d="M1 15.5 L6.6 1.2" stroke="#000" stroke-width="1.25" fill="none"/></svg>
<div class="t" style="left:510.0px;top:414.30px;font-size:15px;line-height:18px;font-weight:normal;font-style:normal;color:#000;letter-spacing:-0.138px;">WorkStati…</div>
<div class="t" style="left:83px;top:431.30px;font-size:15px;line-height:18px;font-weight:normal;font-style:normal;color:#000;letter-spacing:-0.019px;">LogicLev.gas_box.ar_flow_cond.var</div>
<div class="t" style="left:404px;top:431.30px;font-size:15px;line-height:18px;font-weight:normal;font-style:normal;color:#000;letter-spacing:0.182px;">Архив знач…</div>
<svg style="left:503px;top:431.50px" width="8" height="17"><path d="M1 15.5 L6.6 1.2" stroke="#000" stroke-width="1.25" fill="none"/></svg>
<div class="t" style="left:510.0px;top:431.30px;font-size:15px;line-height:18px;font-weight:normal;font-style:normal;color:#000;letter-spacing:-0.138px;">WorkStati…</div>
<div class="t" style="left:83px;top:448.30px;font-size:15px;line-height:18px;font-weight:normal;font-style:normal;color:#000;letter-spacing:-0.051px;">LogicLev.gas_box.ar_flow_sp_cond.var</div>
<div class="t" style="left:404px;top:448.30px;font-size:15px;line-height:18px;font-weight:normal;font-style:normal;color:#000;letter-spacing:0.182px;">Архив знач…</div>
<svg style="left:503px;top:448.50px" width="8" height="17"><path d="M1 15.5 L6.6 1.2" stroke="#000" stroke-width="1.25" fill="none"/></svg>
<div class="t" style="left:510.0px;top:448.30px;font-size:15px;line-height:18px;font-weight:normal;font-style:normal;color:#000;letter-spacing:-0.138px;">WorkStati…</div>
<div class="t" style="left:83px;top:465.30px;font-size:15px;line-height:18px;font-weight:normal;font-style:normal;color:#000;letter-spacing:-0.000px;">LogicLev.gas_box.av1.flow0</div>
<div class="t" style="left:404px;top:465.30px;font-size:15px;line-height:18px;font-weight:normal;font-style:normal;color:#000;letter-spacing:0.182px;">Архив знач…</div>
<svg style="left:503px;top:465.50px" width="8" height="17"><path d="M1 15.5 L6.6 1.2" stroke="#000" stroke-width="1.25" fill="none"/></svg>
<div class="t" style="left:510.0px;top:465.30px;font-size:15px;line-height:18px;font-weight:normal;font-style:normal;color:#000;letter-spacing:-0.138px;">WorkStati…</div>
<div class="t" style="left:83px;top:482.30px;font-size:15px;line-height:18px;font-weight:normal;font-style:normal;color:#000;letter-spacing:0.100px;">av1_flow1</div>
<div class="t" style="left:404px;top:482.30px;font-size:15px;line-height:18px;font-weight:normal;font-style:normal;color:#000;letter-spacing:0.182px;">Архив знач…</div>
<svg style="left:503px;top:482.50px" width="8" height="17"><path d="M1 15.5 L6.6 1.2" stroke="#000" stroke-width="1.25" fill="none"/></svg>
<div class="t" style="left:510.0px;top:482.30px;font-size:15px;line-height:18px;font-weight:normal;font-style:normal;color:#000;letter-spacing:-0.138px;">WorkStati…</div>
<div class="t" style="left:83px;top:499.30px;font-size:15px;line-height:18px;font-weight:normal;font-style:normal;color:#000;letter-spacing:-0.020px;">LogicLev.gas_box.av1.flow1</div>
<div class="t" style="left:404px;top:499.30px;font-size:15px;line-height:18px;font-weight:normal;font-style:normal;color:#000;letter-spacing:0.182px;">Архив знач…</div>
<svg style="left:503px;top:499.50px" width="8" height="17"><path d="M1 15.5 L6.6 1.2" stroke="#000" stroke-width="1.25" fill="none"/></svg>
<div class="t" style="left:510.0px;top:499.30px;font-size:15px;line-height:18px;font-weight:normal;font-style:normal;color:#000;letter-spacing:-0.138px;">WorkStati…</div>
<div class="t" style="left:83px;top:516.30px;font-size:15px;line-height:18px;font-weight:normal;font-style:normal;color:#000;letter-spacing:-0.000px;">LogicLev.gas_box.av1.flow2</div>
<div class="t" style="left:404px;top:516.30px;font-size:15px;line-height:18px;font-weight:normal;font-style:normal;color:#000;letter-spacing:0.182px;">Архив знач…</div>
<svg style="left:503px;top:516.50px" width="8" height="17"><path d="M1 15.5 L6.6 1.2" stroke="#000" stroke-width="1.25" fill="none"/></svg>
<div class="t" style="left:510.0px;top:516.30px;font-size:15px;line-height:18px;font-weight:normal;font-style:normal;color:#000;letter-spacing:-0.138px;">WorkStati…</div>
<div class="t" style="left:83px;top:533.30px;font-size:15px;line-height:18px;font-weight:normal;font-style:normal;color:#000;letter-spacing:0.039px;">LogicLev.gas_box.av1.setpoint0</div>
<div class="t" style="left:404px;top:533.30px;font-size:15px;line-height:18px;font-weight:normal;font-style:normal;color:#000;letter-spacing:0.182px;">Архив знач…</div>
<svg style="left:503px;top:533.50px" width="8" height="17"><path d="M1 15.5 L6.6 1.2" stroke="#000" stroke-width="1.25" fill="none"/></svg>
<div class="t" style="left:510.0px;top:533.30px;font-size:15px;line-height:18px;font-weight:normal;font-style:normal;color:#000;letter-spacing:-0.138px;">WorkStati…</div>
<div class="t" style="left:83px;top:550.30px;font-size:15px;line-height:18px;font-weight:normal;font-style:normal;color:#000;letter-spacing:0.005px;">LogicLev.gas_box.av1.setpoint1</div>
<div class="t" style="left:404px;top:550.30px;font-size:15px;line-height:18px;font-weight:normal;font-style:normal;color:#000;letter-spacing:0.182px;">Архив знач…</div>
<svg style="left:503px;top:550.50px" width="8" height="17"><path d="M1 15.5 L6.6 1.2" stroke="#000" stroke-width="1.25" fill="none"/></svg>
<div class="t" style="left:510.0px;top:550.30px;font-size:15px;line-height:18px;font-weight:normal;font-style:normal;color:#000;letter-spacing:-0.138px;">WorkStati…</div>
<div class="t" style="left:83px;top:567.30px;font-size:15px;line-height:18px;font-weight:normal;font-style:normal;color:#000;letter-spacing:0.039px;">LogicLev.gas_box.av1.setpoint2</div>
<div class="t" style="left:404px;top:567.30px;font-size:15px;line-height:18px;font-weight:normal;font-style:normal;color:#000;letter-spacing:0.182px;">Архив знач…</div>
<svg style="left:503px;top:567.50px" width="8" height="17"><path d="M1 15.5 L6.6 1.2" stroke="#000" stroke-width="1.25" fill="none"/></svg>
<div class="t" style="left:510.0px;top:567.30px;font-size:15px;line-height:18px;font-weight:normal;font-style:normal;color:#000;letter-spacing:-0.138px;">WorkStati…</div>
<div class="t" style="left:83px;top:584.30px;font-size:15px;line-height:18px;font-weight:normal;font-style:normal;color:#000;letter-spacing:-0.113px;">LogicLev.gas_box.av1.valve0</div>
<div class="t" style="left:404px;top:584.30px;font-size:15px;line-height:18px;font-weight:normal;font-style:normal;color:#000;letter-spacing:0.182px;">Архив знач…</div>
<svg style="left:503px;top:584.50px" width="8" height="17"><path d="M1 15.5 L6.6 1.2" stroke="#000" stroke-width="1.25" fill="none"/></svg>
<div class="t" style="left:510.0px;top:584.30px;font-size:15px;line-height:18px;font-weight:normal;font-style:normal;color:#000;letter-spacing:-0.138px;">WorkStati…</div>
<div class="t" style="left:83px;top:601.30px;font-size:15px;line-height:18px;font-weight:normal;font-style:normal;color:#000;letter-spacing:0.034px;">LogicLev.group_tags.blue_x1.var</div>
<div class="t" style="left:404px;top:601.30px;font-size:15px;line-height:18px;font-weight:normal;font-style:normal;color:#000;letter-spacing:0.182px;">Архив знач…</div>
<svg style="left:503px;top:601.50px" width="8" height="17"><path d="M1 15.5 L6.6 1.2" stroke="#000" stroke-width="1.25" fill="none"/></svg>
<div class="t" style="left:510.0px;top:601.30px;font-size:15px;line-height:18px;font-weight:normal;font-style:normal;color:#000;letter-spacing:-0.138px;">WorkStati…</div>
<div class="t" style="left:83px;top:618.30px;font-size:15px;line-height:18px;font-weight:normal;font-style:normal;color:#000;letter-spacing:-0.050px;">Laserbox.iii.eee.val_blue_x1</div>
<div class="t" style="left:404px;top:618.30px;font-size:15px;line-height:18px;font-weight:normal;font-style:normal;color:#000;letter-spacing:0.182px;">Архив знач…</div>
<svg style="left:503px;top:618.50px" width="8" height="17"><path d="M1 15.5 L6.6 1.2" stroke="#000" stroke-width="1.25" fill="none"/></svg>
<div class="t" style="left:510.0px;top:618.30px;font-size:15px;line-height:18px;font-weight:normal;font-style:normal;color:#000;letter-spacing:-0.138px;">WorkStati…</div>
<div class="t" style="left:83px;top:635.30px;font-size:15px;line-height:18px;font-weight:normal;font-style:normal;color:#000;letter-spacing:0.137px;">LogicLev.heater_cond.heater_current_get.var</div>
<div class="t" style="left:404px;top:635.30px;font-size:15px;line-height:18px;font-weight:normal;font-style:normal;color:#000;letter-spacing:0.182px;">Архив знач…</div>
<svg style="left:503px;top:635.50px" width="8" height="17"><path d="M1 15.5 L6.6 1.2" stroke="#000" stroke-width="1.25" fill="none"/></svg>
<div class="t" style="left:510.0px;top:635.30px;font-size:15px;line-height:18px;font-weight:normal;font-style:normal;color:#000;letter-spacing:-0.138px;">WorkStati…</div>
<div class="t" style="left:83px;top:652.30px;font-size:15px;line-height:18px;font-weight:normal;font-style:normal;color:#000;letter-spacing:0.087px;">LogicLev.heater_cond.heater_power_show.var</div>
<div class="t" style="left:404px;top:652.30px;font-size:15px;line-height:18px;font-weight:normal;font-style:normal;color:#000;letter-spacing:0.182px;">Архив знач…</div>
<svg style="left:503px;top:652.50px" width="8" height="17"><path d="M1 15.5 L6.6 1.2" stroke="#000" stroke-width="1.25" fill="none"/></svg>
<div class="t" style="left:510.0px;top:652.30px;font-size:15px;line-height:18px;font-weight:normal;font-style:normal;color:#000;letter-spacing:-0.138px;">WorkStati…</div>
<div class="t" style="left:83px;top:669.30px;font-size:15px;line-height:18px;font-weight:normal;font-style:normal;color:#000;letter-spacing:0.144px;">LogicLev.heater_cond.heater_setpoint.var</div>
<div class="t" style="left:404px;top:669.30px;font-size:15px;line-height:18px;font-weight:normal;font-style:normal;color:#000;letter-spacing:0.182px;">Архив знач…</div>
<svg style="left:503px;top:669.50px" width="8" height="17"><path d="M1 15.5 L6.6 1.2" stroke="#000" stroke-width="1.25" fill="none"/></svg>
<div class="t" style="left:510.0px;top:669.30px;font-size:15px;line-height:18px;font-weight:normal;font-style:normal;color:#000;letter-spacing:-0.138px;">WorkStati…</div>
</div>
<div style="left:593px;top:93px;width:1px;height:704px;background:#b3b4ab;"></div>
<div style="left:594px;top:93px;width:13px;height:704px;background:#eef0e8;"></div>
<div style="left:594px;top:93px;width:13px;height:13px;background:#fefef7;"></div>
<div style="left:594px;top:106px;width:13px;height:1px;background:#b3b4ab;"></div>
<svg style="left:596px;top:98px" width="9" height="5"><path d="M0 4 L4 0 L8 4 Z" fill="#45463f"/></svg>
<div style="left:594px;top:486px;width:13px;height:1px;background:#b3b4ab;"></div>
<div style="left:594px;top:487px;width:13px;height:170px;background:#fefef7;"></div>
<div style="left:594px;top:657px;width:13px;height:1px;background:#b3b4ab;"></div>
<div style="left:594px;top:783px;width:13px;height:1px;background:#b3b4ab;"></div>
<div style="left:594px;top:784px;width:13px;height:13px;background:#fefef7;"></div>
<svg style="left:596px;top:788px" width="9" height="5"><path d="M0 0 L8 0 L4 4 Z" fill="#45463f"/></svg>
<div style="left:7px;top:797px;width:600px;height:1px;background:#b3b4ab;"></div>
<div style="left:7px;top:798px;width:586px;height:13px;background:#fefef7;"></div>
<div style="left:20px;top:798px;width:1px;height:13px;background:#b3b4ab;"></div>
<svg style="left:11px;top:800px" width="5" height="9"><path d="M4 0 L0 4 L4 8 Z" fill="#45463f"/></svg>
<div style="left:565px;top:798px;width:1px;height:13px;background:#b3b4ab;"></div>
<div style="left:566px;top:798px;width:13px;height:13px;background:#eef0e8;"></div>
<div style="left:579px;top:798px;width:1px;height:13px;background:#b3b4ab;"></div>
<svg style="left:584px;top:800px" width="5" height="9"><path d="M0 0 L4 4 L0 8 Z" fill="#45463f"/></svg>
<div style="left:594px;top:798px;width:13px;height:13px;background:#eef0e8;"></div>
<div style="left:6px;top:818px;width:602px;height:25px;background:#fefef7;border:1px solid #b3b4ab;border-radius:3px;"></div>
<div style="left:610px;top:461px;width:1px;height:1px;background:#a9aaa2;"></div>
<div style="left:611px;top:462px;width:1px;height:1px;background:#ffffff;"></div>
<div style="left:610px;top:464px;width:1px;height:1px;background:#a9aaa2;"></div>
<div style="left:611px;top:465px;width:1px;height:1px;background:#ffffff;"></div>
<div style="left:610px;top:467px;width:1px;height:1px;background:#a9aaa2;"></div>
<div style="left:611px;top:468px;width:1px;height:1px;background:#ffffff;"></div>
<div style="left:610px;top:470px;width:1px;height:1px;background:#a9aaa2;"></div>
<div style="left:611px;top:471px;width:1px;height:1px;background:#ffffff;"></div>
<div style="left:610px;top:473px;width:1px;height:1px;background:#a9aaa2;"></div>
<div style="left:611px;top:474px;width:1px;height:1px;background:#ffffff;"></div>
<div style="left:610px;top:476px;width:1px;height:1px;background:#a9aaa2;"></div>
<div style="left:611px;top:477px;width:1px;height:1px;background:#ffffff;"></div>
<div style="left:612px;top:92px;width:951px;height:751px;background:#ffffff;"></div>
<div style="left:613px;top:93px;width:950px;height:749px;background:#eef0e8;border-top:1px solid #a9aaa1;border-left:1px solid #a9aaa1;"></div>
<div style="left:612px;top:842px;width:951px;height:1px;background:#7b7c74;"></div>
<div style="left:1561px;top:93px;width:2px;height:750px;background:#7b7c74;"></div>
<div class="t" style="left:817px;top:103.87px;font-size:20px;line-height:24px;font-weight:bold;font-style:italic;color:#000;letter-spacing:-0.022px;">Архив значений: LogicLev.group_tags.Pvs1_pressure.var</div>
<div style="left:623px;top:160px;width:929px;height:671px;background:#eef0e8;border:1px solid #b3b4ab;"></div>
<div style="left:624px;top:161px;width:927px;height:669px;background:#eef0e8;border:1px solid #ffffff;"></div>
<div style="left:625px;top:162px;width:925px;height:667px;background:#eef0e8;border:1px solid #c3c4bb;"></div>
<div style="left:691px;top:135px;width:113px;height:26px;background:#eef0e8;border:1px solid #b3b4ab;border-radius:3px 3px 2px 2px;"></div>
<div style="left:803px;top:135px;width:92px;height:26px;background:#eef0e8;border:1px solid #b3b4ab;border-radius:3px 3px 2px 2px;"></div>
<div style="left:623px;top:133px;width:69px;height:29px;background:#fefef7;border:1px solid #b3b4ab;border-bottom:none;border-radius:3px 3px 0 0;"></div>
<div style="left:624px;top:161px;width:1px;height:1px;background:#fefef7;"></div>
<div class="t" style="left:636px;top:139.40px;font-size:15px;line-height:18px;font-weight:normal;font-style:normal;color:#000;letter-spacing:0.036px;">Архив</div>
<div class="t" style="left:703.5px;top:140.00px;font-size:15px;line-height:18px;font-weight:normal;font-style:normal;color:#000;letter-spacing:0.305px;">Архиваторы</div>
<div class="t" style="left:815.3px;top:140.00px;font-size:15px;line-height:18px;font-weight:normal;font-style:normal;color:#000;letter-spacing:0.046px;">Значения</div>
<div class="t" style="left:635.5px;top:172.60px;font-size:15px;line-height:18px;font-weight:normal;font-style:normal;color:#000;letter-spacing:-0.000px;">Состояние</div>
<div style="left:636px;top:193px;width:904px;height:96px;background:transparent;border:1px solid #d6d7ce;border-radius:2px;"></div>
<div class="t" style="left:640.5px;top:197.50px;font-size:15px;line-height:18px;font-weight:normal;font-style:normal;color:#000;letter-spacing:0.305px;">Выполняется:</div>
<div style="left:746px;top:199px;width:14px;height:14px;background:#fefef7;border:1px solid #c3c4bb;"></div>
<svg style="left:746px;top:199px" width="14" height="14"><path d="M3.2 6.8 L6 10.8 L10.8 2.8" fill="none" stroke="#000" stroke-width="1.7"/></svg>
<div class="t" style="left:640.5px;top:218.40px;font-size:15px;line-height:18px;font-weight:normal;font-style:normal;color:#000;letter-spacing:0.031px;">Конец буфера:</div>
<div class="t" style="left:751px;top:218.40px;font-size:15px;line-height:18px;font-weight:bold;font-style:normal;color:#000;letter-spacing:-0.050px;">22-01-2021 15:12:46.0</div>
<div class="t" style="left:640.5px;top:237.60px;font-size:15px;line-height:18px;font-weight:normal;font-style:normal;color:#000;letter-spacing:-0.100px;">Начало буфера:</div>
<div class="t" style="left:759px;top:237.60px;font-size:15px;line-height:18px;font-weight:bold;font-style:normal;color:#000;letter-spacing:0.006px;">22-01-2021 15:11:07.0</div>
<div class="t" style="left:640.5px;top:262.10px;font-size:15px;line-height:18px;font-weight:normal;font-style:normal;color:#000;letter-spacing:0.088px;">БД архива:</div>
<div style="left:724px;top:258px;width:230px;height:25px;background:#fefef7;border:1px solid #b3b4ab;border-radius:3px;background:linear-gradient(#fefef7 0, #fefef7 17px, #eef0e8 17px, #eef0e8 100%);"></div>
<svg style="left:939px;top:268.5px" width="9" height="5"><path d="M0 0 L8 0 L4 4 Z" fill="#45463f"/></svg>
<div class="t" style="left:729.3px;top:262.10px;font-size:15px;line-height:18px;font-weight:normal;font-style:normal;color:#000;">*.*</div>
<div class="t" style="left:635.5px;top:293.30px;font-size:15px;line-height:18px;font-weight:normal;font-style:normal;color:#000;letter-spacing:0.196px;">Конфигурация</div>
<div style="left:636px;top:313px;width:904px;height:401px;background:transparent;border:1px solid #d6d7ce;border-radius:2px;"></div>
<div class="t" style="left:640.4px;top:317.70px;font-size:15px;line-height:18px;font-weight:normal;font-style:normal;color:#000;letter-spacing:0.647px;">Identifier:</div>
<div class="t" style="left:715.2px;top:317.70px;font-size:15px;line-height:18px;font-weight:bold;font-style:normal;color:#000;letter-spacing:-0.286px;">Pvs1_pressure_var</div>
<div class="t" style="left:640.4px;top:341.80px;font-size:15px;line-height:18px;font-weight:normal;font-style:normal;color:#000;letter-spacing:0.297px;">Name:</div>
<div style="left:691px;top:338px;width:843px;height:25px;background:#fefef7;border:1px solid #b3b4ab;border-radius:3px;"></div>
<div class="t" style="left:640.4px;top:366.30px;font-size:15px;line-height:18px;font-weight:normal;font-style:normal;color:#000;letter-spacing:0.379px;">Description:</div>
<div style="left:641px;top:386px;width:893px;height:102px;background:#fefef7;border:1px solid #b3b4ab;"></div>
<div class="t" style="left:640.3px;top:491.40px;font-size:15px;line-height:18px;font-weight:normal;font-style:normal;color:#000;letter-spacing:0.465px;">To start:</div>
<div style="left:703px;top:492px;width:14px;height:14px;background:#fefef7;border:1px solid #c3c4bb;"></div>
<svg style="left:703px;top:492px" width="14" height="14"><path d="M3.2 6.8 L6 10.8 L10.8 2.8" fill="none" stroke="#000" stroke-width="1.7"/></svg>
<div class="t" style="left:640.3px;top:514.60px;font-size:15px;line-height:18px;font-weight:normal;font-style:normal;color:#000;letter-spacing:-0.038px;">Source:</div>
<div style="left:698px;top:511px;width:196px;height:25px;background:#fefef7;border:1px solid #b3b4ab;border-radius:3px;background:linear-gradient(#fefef7 0, #fefef7 17px, #eef0e8 17px, #eef0e8 100%);"></div>
<svg style="left:879px;top:521.5px" width="9" height="5"><path d="M0 0 L8 0 L4 4 Z" fill="#45463f"/></svg>
<div class="t" style="left:703.6px;top:514.60px;font-size:15px;line-height:18px;font-weight:normal;font-style:normal;color:#000;letter-spacing:0.285px;">Active param. attribute</div>
<div style="left:900px;top:511px;width:634px;height:25px;background:#fefef7;border:1px solid #b3b4ab;border-radius:3px;"></div>
<div style="left:1513px;top:512px;width:1px;height:23px;background:#b3b4ab;"></div>
<div style="left:1514px;top:530px;width:19px;height:5px;background:#eef0e8;"></div>
<svg style="left:1519px;top:522px" width="9" height="5"><path d="M0 0 L8 0 L4 4 Z" fill="#45463f"/></svg>
<div class="t" style="left:905px;top:514.60px;font-size:15px;line-height:18px;font-weight:normal;font-style:normal;color:#000;letter-spacing:-0.108px;">LogicLev.group_tags.Pvs1_pressure.var (+)</div>
<div class="t" style="left:640.3px;top:543.40px;font-size:15px;line-height:18px;font-weight:normal;font-style:normal;color:#000;letter-spacing:0.205px;">Data combining mode:</div>
<div style="left:800px;top:539px;width:139px;height:25px;background:#fefef7;border:1px solid #b3b4ab;border-radius:3px;background:linear-gradient(#fefef7 0, #fefef7 17px, #eef0e8 17px, #eef0e8 100%);"></div>
<svg style="left:924px;top:549.5px" width="9" height="5"><path d="M0 0 L8 0 L4 4 Z" fill="#45463f"/></svg>
<div class="t" style="left:805.3px;top:542.60px;font-size:15px;line-height:18px;font-weight:normal;font-style:normal;color:#000;letter-spacing:0.040px;">Moving average</div>
<div class="t" style="left:640.3px;top:570.60px;font-size:15px;line-height:18px;font-weight:normal;font-style:normal;color:#000;letter-spacing:0.253px;">Value type:</div>
<div style="left:724px;top:567px;width:117px;height:25px;background:#fefef7;border:1px solid #b3b4ab;border-radius:3px;background:linear-gradient(#fefef7 0, #fefef7 17px, #eef0e8 17px, #eef0e8 100%);"></div>
<svg style="left:825px;top:577.5px" width="9" height="5"><path d="M0 0 L8 0 L4 4 Z" fill="#45463f"/></svg>
<div class="t" style="left:729.5px;top:570.60px;font-size:15px;line-height:18px;font-weight:normal;font-style:normal;color:#000;letter-spacing:-0.062px;">Real(Double)</div>
<div class="t" style="left:640.3px;top:598.70px;font-size:15px;line-height:18px;font-weight:normal;font-style:normal;color:#000;letter-spacing:0.190px;">Buffer period, seconds:</div>
<div style="left:805px;top:595px;width:144px;height:25px;background:#fefef7;border:1px solid #b3b4ab;border-radius:3px;"></div>
<div class="t" style="left:809.4px;top:598.70px;font-size:15px;line-height:18px;font-weight:normal;font-style:normal;color:#000;">1</div>
<div class="t" style="left:640.3px;top:626.70px;font-size:15px;line-height:18px;font-weight:normal;font-style:normal;color:#000;letter-spacing:0.208px;">Buffer size, items:</div>
<div style="left:769px;top:623px;width:115px;height:25px;background:#fefef7;border:1px solid #b3b4ab;border-radius:3px;"></div>
<div class="t" style="left:773px;top:626.70px;font-size:15px;line-height:18px;font-weight:normal;font-style:normal;color:#000;">100</div>
<div class="t" style="left:640.3px;top:650.60px;font-size:15px;line-height:18px;font-weight:normal;font-style:normal;color:#000;letter-spacing:0.383px;">Buffer in the hard time grid:</div>
<div style="left:837px;top:652px;width:14px;height:14px;background:#fefef7;border:1px solid #c3c4bb;"></div>
<svg style="left:837px;top:652px" width="14" height="14"><path d="M3.2 6.8 L6 10.8 L10.8 2.8" fill="none" stroke="#000" stroke-width="1.7"/></svg>
<div class="t" style="left:640.3px;top:671.30px;font-size:15px;line-height:18px;font-weight:normal;font-style:normal;color:#000;letter-spacing:0.369px;">Buffer in the high time resolution:</div>
<div style="left:878px;top:672px;width:14px;height:14px;background:#fefef7;border:1px solid #c3c4bb;"></div>
<svg style="left:878px;top:672px" width="14" height="14"><path d="M3.2 6.8 L6 10.8 L10.8 2.8" fill="none" stroke="#000" stroke-width="1.7"/></svg>
<div class="t" style="left:640.3px;top:691.00px;font-size:15px;line-height:18px;font-weight:normal;font-style:normal;color:#000;letter-spacing:0.172px;">Filling the passage points with the last value:</div>
<div style="left:951px;top:692px;width:14px;height:14px;background:#fefef7;border:1px solid #c3c4bb;"></div>
<svg style="left:1501px;top:854px" width="14" height="9"><path d="M0.5 0.5 L11.5 0.5 L6 7 Z" fill="#000"/><path d="M12 1 L6.5 7.5" stroke="#8a8b84" stroke-width="1"/></svg>
<div class="t" style="left:1521.5px;top:850.30px;font-size:15px;line-height:18px;font-weight:normal;font-style:normal;color:#000;">*</div>
<div class="t" style="left:1535.5px;top:848.36px;font-size:16px;line-height:19px;font-weight:normal;font-style:normal;color:#b0122c;letter-spacing:0.792px;">root</div>
</body></html>
